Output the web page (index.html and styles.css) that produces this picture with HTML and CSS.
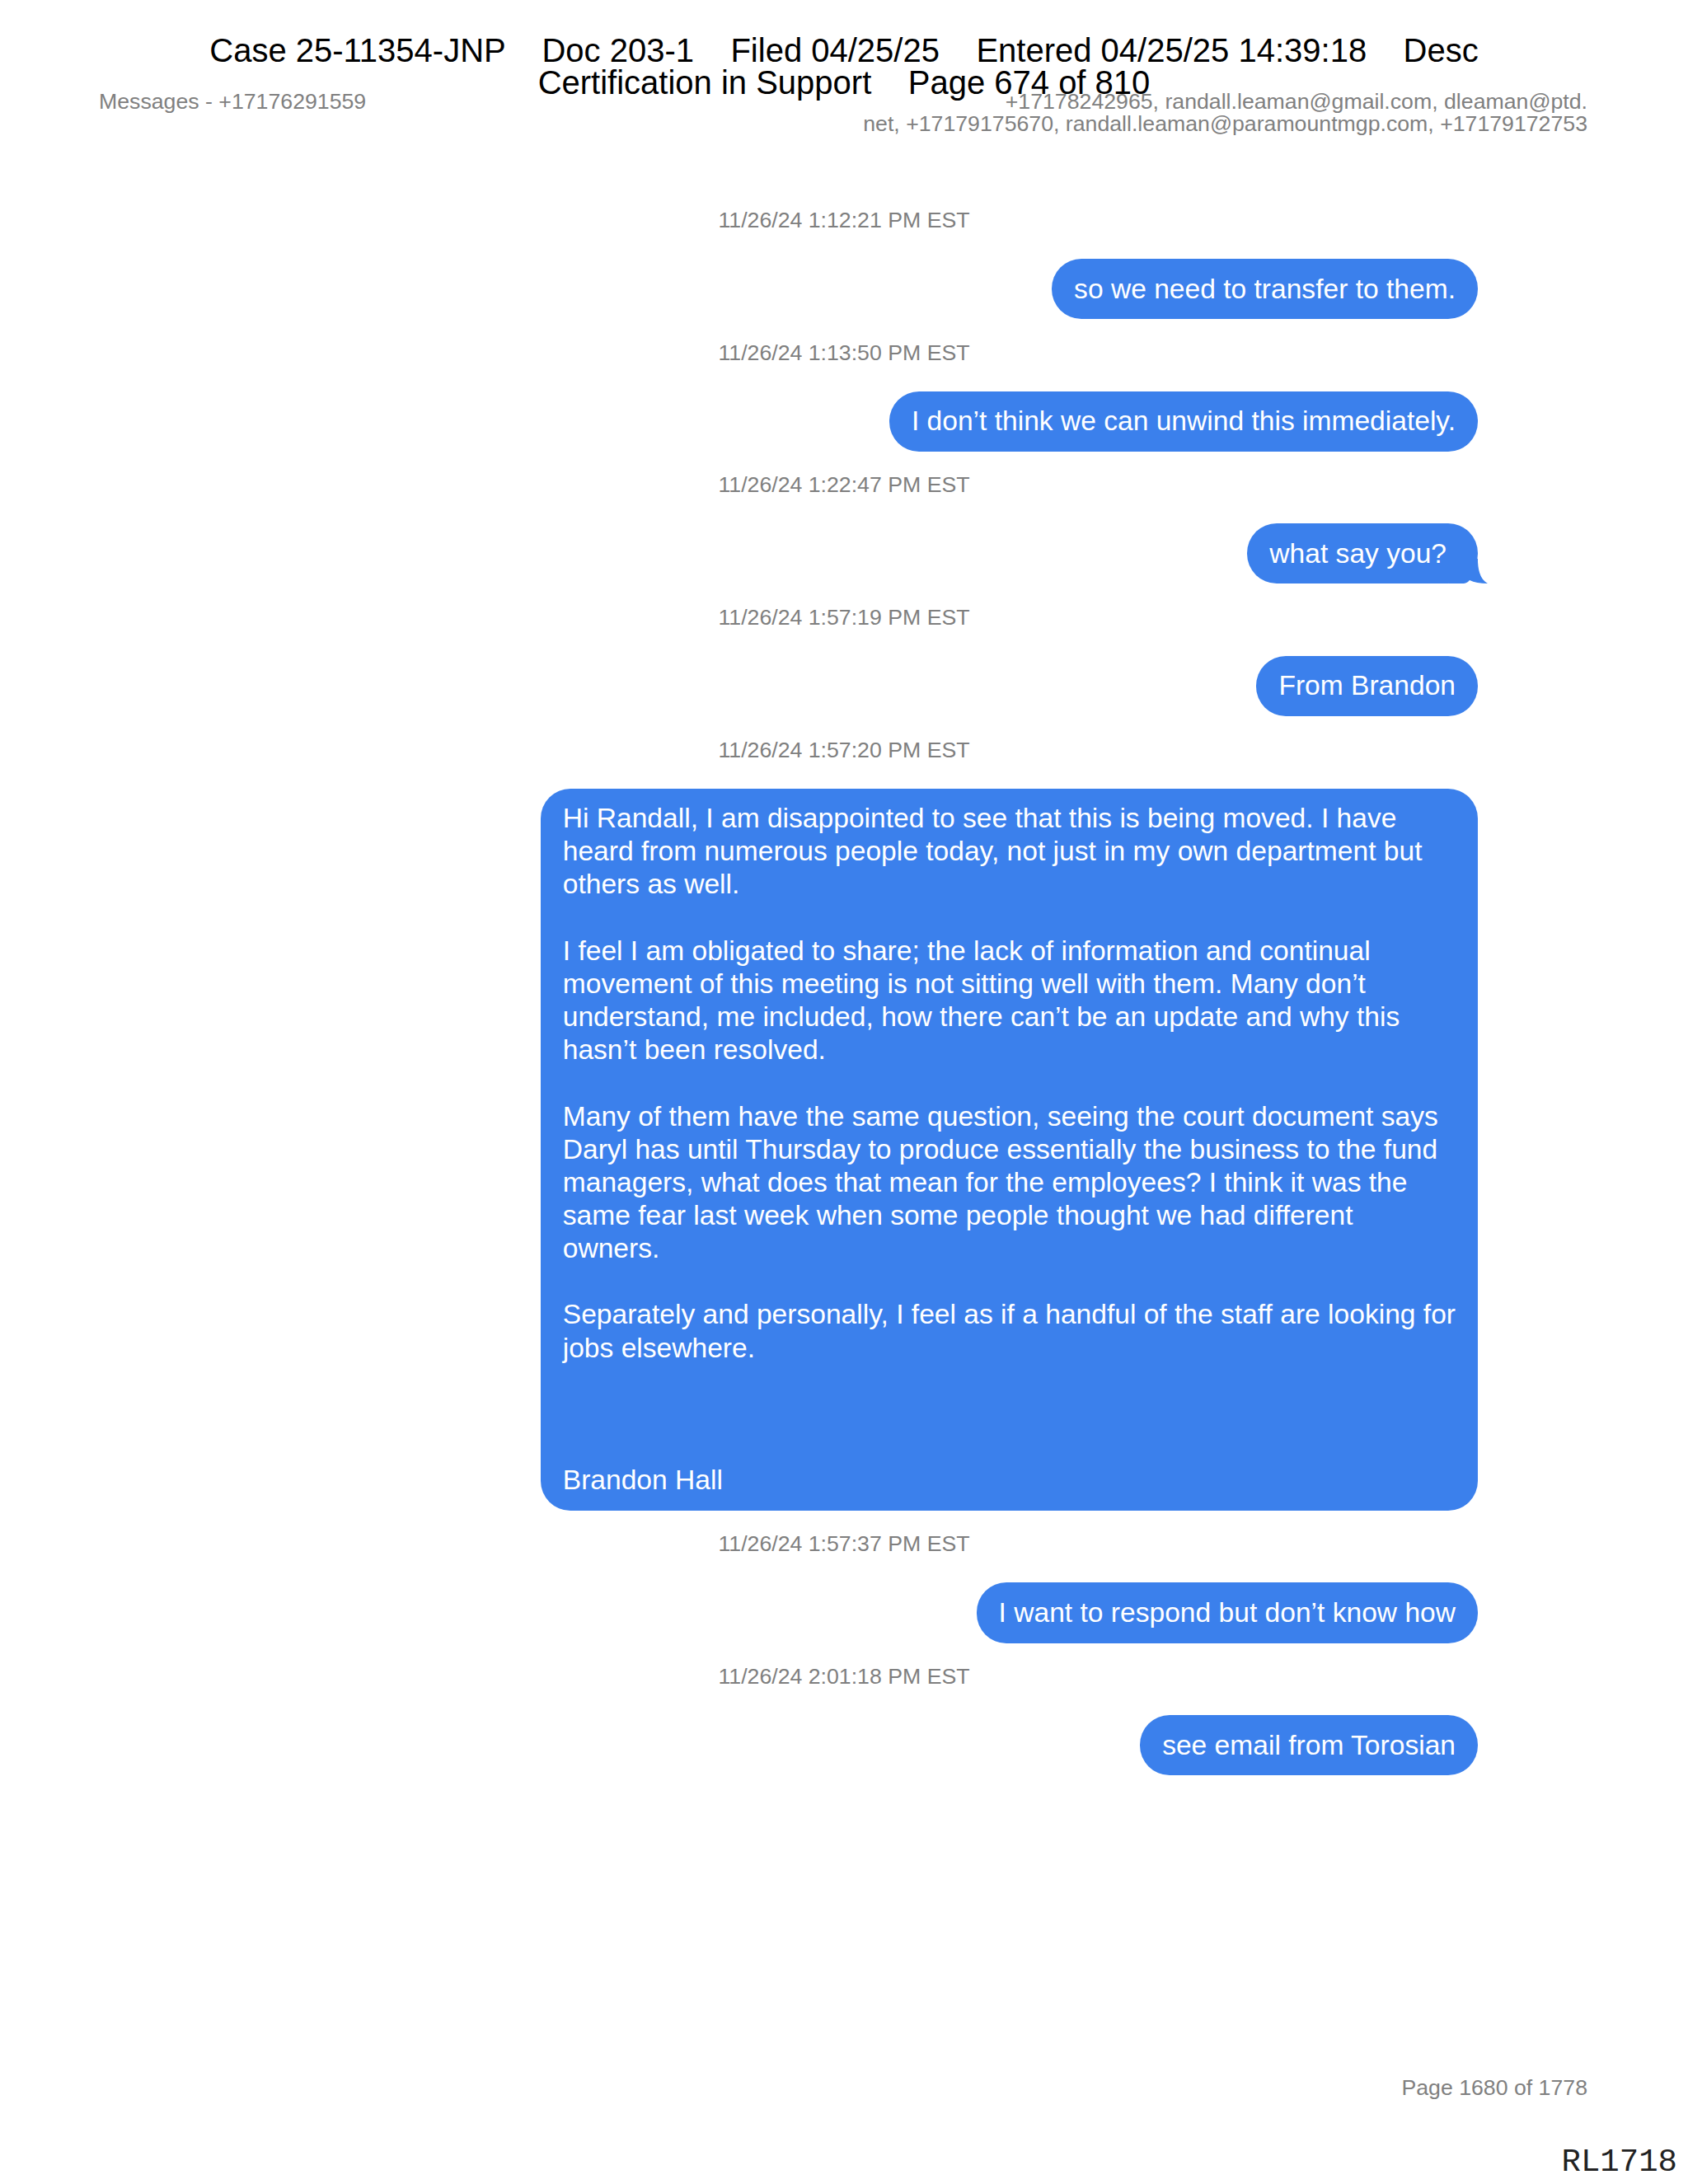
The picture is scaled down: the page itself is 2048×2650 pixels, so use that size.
FILE: index.html
```html
<!DOCTYPE html>
<html lang="en">

<head>
  <meta charset="UTF-8">
  <meta name="viewport" content="width=device-width, initial-scale=1.0">
  <title>Messages - +17176291559</title>
  <link rel="stylesheet" href="styles.css">
</head>

<body>

  <div class="page">
    <!-- Court filing stamp (printed over the page) -->
    <div class="stamp">
      <div class="stamp-line">Case 25-11354-JNP    Doc 203-1    Filed 04/25/25    Entered 04/25/25 14:39:18    Desc</div>
      <div class="stamp-line">Certification in Support    Page 674 of 810</div>
    </div>

    <!-- Conversation header -->
    <header class="meta">
      <div class="meta-title">Messages - +17176291559</div>
      <div class="meta-people">+17178242965, randall.leaman@gmail.com, dleaman@ptd.<br>net, +17179175670, randall.leaman@paramountmgp.com, +17179172753</div>
    </header>

    <!-- Messages -->
    <main class="chat">
      <div class="time">11/26/24 1:12:21 PM EST</div>
      <div class="bubble">so we need to transfer to them.</div>

      <div class="time">11/26/24 1:13:50 PM EST</div>
      <div class="bubble">I don’t think we can unwind this immediately.</div>

      <div class="time">11/26/24 1:22:47 PM EST</div>
      <div class="bubble bubble-tail">what say you?
        <svg class="tail" width="48" height="30" viewBox="0 0 48 30">
          <path d="M0 30 H18 Q22 30 25 26 Q33 30 47 30 Q36 24 35 4 V0 H0 Z" />
        </svg>
      </div>

      <div class="time">11/26/24 1:57:19 PM EST</div>
      <div class="bubble">From Brandon</div>

      <div class="time">11/26/24 1:57:20 PM EST</div>
      <div class="bubble">Hi Randall, I am disappointed to see that this is being moved. I have<br>
        heard from numerous people today, not just in my own department but<br>
        others as well.<br>
        <br>
        I feel I am obligated to share; the lack of information and continual<br>
        movement of this meeting is not sitting well with them. Many don’t<br>
        understand, me included, how there can’t be an update and why this<br>
        hasn’t been resolved.<br>
        <br>
        Many of them have the same question, seeing the court document says<br>
        Daryl has until Thursday to produce essentially the business to the fund<br>
        managers, what does that mean for the employees? I think it was the<br>
        same fear last week when some people thought we had different<br>
        owners.<br>
        <br>
        Separately and personally, I feel as if a handful of the staff are looking for<br>
        jobs elsewhere.<br>
        <br>
        <br>
        <br>
        Brandon Hall</div>

      <div class="time">11/26/24 1:57:37 PM EST</div>
      <div class="bubble">I want to respond but don’t know how</div>

      <div class="time">11/26/24 2:01:18 PM EST</div>
      <div class="bubble">see email from Torosian</div>
    </main>

    <footer class="foot">Page 1680 of 1778</footer>

    <div class="bates">RL1718</div>
  </div>

</body>

</html>
```

FILE: styles.css
```css
/* Global Styles */
body {
  font-family: "Liberation Sans", Arial, sans-serif;
  background-color: white;
  margin: 0;
  padding: 0;
}

.page {
  position: relative;
  display: flex;
  flex-direction: column;
  min-height: 2650px;
  padding: 110px 122px 103px 120px;
  box-sizing: border-box;
}

/* Filing stamp */
.stamp {
  position: absolute;
  top: 42px;
  left: 0;
  right: 0;
  text-align: center;
  font-size: 40px;
  line-height: 39px;
  color: #000;
}

.stamp-line {
  white-space: pre;
}

/* Header */
.meta {
  display: flex;
  justify-content: space-between;
  align-items: flex-start;
  font-size: 26.7px;
  line-height: 27px;
  color: #808080;
}

.meta-people {
  text-align: right;
}

/* Chat */
.chat {
  display: flex;
  flex-direction: column;
  margin: 87px 133px 0 135px;
}

.time {
  align-self: center;
  font-size: 26.7px;
  line-height: 32px;
  color: #7f7f7f;
}

.bubble {
  position: relative;
  align-self: flex-end;
  margin: 31px 0 24.5px;
  padding: 16.5px 27px;
  background-color: #3b80ec;
  color: white;
  font-size: 33.6px;
  line-height: 40.15px;
  border-radius: 36px;
}

.bubble-tail {
  padding-right: 38px;
}

.tail {
  position: absolute;
  right: -13px;
  bottom: 0;
  fill: #3b80ec;
}

/* Footer */
.foot {
  margin-top: auto;
  text-align: right;
  font-size: 26.7px;
  line-height: 27px;
  color: #808080;
}

.bates {
  position: absolute;
  right: 13px;
  bottom: 6px;
  font-family: "Liberation Mono", "Courier New", monospace;
  font-size: 39px;
  line-height: 39px;
  color: #222;
}
```
